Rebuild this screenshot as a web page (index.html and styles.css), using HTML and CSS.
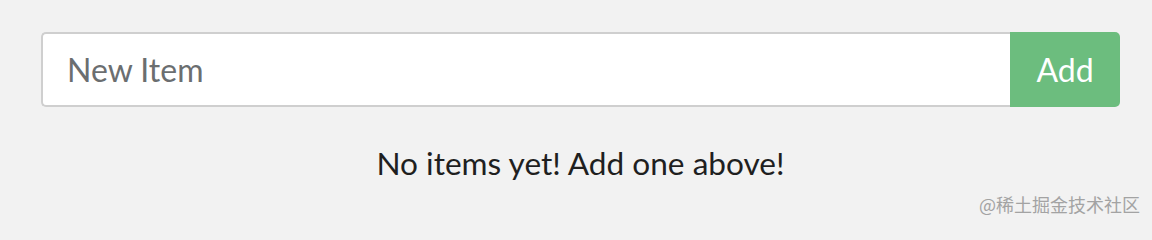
FILE: index.html
```html
<!DOCTYPE html>
<html lang="en">
<head>
<meta charset="utf-8">
<title>Todo</title>
<link rel="stylesheet" href="styles.css">
</head>
<body>
<main class="app">
  <form class="input-group">
    <input class="item-input" type="text" placeholder="New Item">
    <button class="add-btn" type="button">Add</button>
  </form>
  <p class="empty">No items yet! Add one above!</p>
</main>
<div class="watermark">@稀土掘金技术社区</div>
</body>
</html>
```
FILE: styles.css
```css
html, body {
  margin: 0;
  padding: 0;
  background: #f2f2f2;
  overflow: hidden;
}
body {
  font-family: Lato, "Noto Sans", sans-serif;
  position: relative;
  min-height: 226px;
}
.app {
  padding: 32px 32px 0 41px;
}
.input-group {
  display: flex;
  margin: 0;
  height: 75px;
}
.item-input {
  flex: 1;
  min-width: 0;
  box-sizing: border-box;
  height: 75px;
  margin: 0;
  border: 2px solid #cfcfcf;
  border-right: none;
  border-radius: 5px 0 0 5px;
  background: #fff;
  padding: 0 24px;
  font-family: Lato, sans-serif;
  font-size: 32px;
  color: #333;
  outline: none;
}
.item-input::placeholder {
  color: #6b6e70;
  opacity: 1;
}
.add-btn {
  width: 110px;
  height: 75px;
  margin: 0;
  border: none;
  border-radius: 0 5px 5px 0;
  background: #6cbd7e;
  color: #fff;
  font-family: Lato, sans-serif;
  font-size: 32px;
  padding: 0;
}
.empty {
  margin: 36px 0 0;
  text-align: center;
  font-size: 31.6px;
  line-height: 40px;
  color: #1f1f1f;
}
.watermark {
  position: absolute;
  right: 12px;
  top: 193px;
  font-family: "Noto Sans CJK SC", sans-serif;
  font-size: 18px;
  line-height: 22px;
  color: #a3a3a3;
}
```
